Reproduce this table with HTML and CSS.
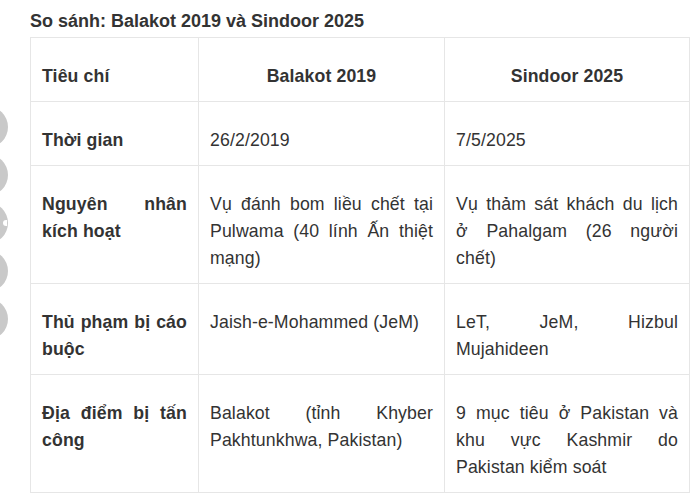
FILE: index.html
```html
<!DOCTYPE html>
<html lang="vi">
<head>
<meta charset="utf-8">
<title>So sánh: Balakot 2019 và Sindoor 2025</title>
<link rel="stylesheet" href="styles.css">
</head>
<body>
<div class="share">
  <span class="share-btn"></span>
  <span class="share-btn"></span>
  <span class="share-btn share-btn-notch"></span>
  <span class="share-btn"></span>
  <span class="share-btn"></span>
</div>
<main class="article">
  <h3 class="title">So sánh: Balakot 2019 và Sindoor 2025</h3>
  <table class="compare">
    <colgroup>
      <col class="c1">
      <col class="c2">
      <col class="c3">
    </colgroup>
    <thead>
      <tr>
        <th class="th-left">Tiêu chí</th>
        <th class="th-center">Balakot 2019</th>
        <th class="th-center">Sindoor 2025</th>
      </tr>
    </thead>
    <tbody>
      <tr>
        <th>Thời gian</th>
        <td>26/2/2019</td>
        <td>7/5/2025</td>
      </tr>
      <tr>
        <th>Nguyên nhân kích hoạt</th>
        <td>Vụ đánh bom liều chết tại Pulwama (40 lính Ấn thiệt mạng)</td>
        <td>Vụ thảm sát khách du lịch ở Pahalgam (26 người chết)</td>
      </tr>
      <tr>
        <th>Thủ phạm bị cáo buộc</th>
        <td>Jaish-e-Mohammed (JeM)</td>
        <td>LeT, JeM, Hizbul Mujahideen</td>
      </tr>
      <tr>
        <th>Địa điểm bị tấn công</th>
        <td>Balakot (tỉnh Khyber Pakhtunkhwa, Pakistan)</td>
        <td>9 mục tiêu ở Pakistan và khu vực Kashmir do Pakistan kiểm soát</td>
      </tr>
    </tbody>
  </table>
</main>
</body>
</html>
```
FILE: styles.css
```css
html, body {
  margin: 0;
  padding: 0;
  background: #ffffff;
}

body {
  font-family: "Liberation Sans", Arial, sans-serif;
  color: #333333;
  overflow: hidden;
}

.article {
  padding: 10px 10px 0 30px;
}

.title {
  margin: 0 0 5px 0;
  font-size: 18px;
  line-height: 22px;
  font-weight: bold;
  color: #333333;
}

.compare {
  border-collapse: collapse;
  table-layout: fixed;
  width: 659px;
  font-size: 17.7px;
  line-height: 27px;
  letter-spacing: 0.12px;
}

.c1 { width: 168px; }
.c2 { width: 246px; }
.c3 { width: 245px; }

.compare th,
.compare td {
  border: 1px solid #e6e6e6;
  padding: 25px 11px 11px 11px;
  vertical-align: top;
  text-align: justify;
  color: #333333;
}

.compare th {
  font-weight: bold;
}

.compare td {
  font-weight: normal;
}

.compare .th-left {
  text-align: left;
}

.compare .th-center {
  text-align: center;
}

.share {
  position: fixed;
  left: -34px;
  top: 106px;
  display: flex;
  flex-direction: column;
  gap: 6px;
}

.share-btn {
  display: block;
  width: 42px;
  height: 42px;
  border-radius: 50%;
  background: #c9c9c9;
  position: relative;
}

.share-btn-notch::after {
  content: "";
  position: absolute;
  right: 1px;
  top: 18px;
  width: 4px;
  height: 6px;
  border-radius: 3px 0 0 3px;
  background: #ffffff;
}
```
